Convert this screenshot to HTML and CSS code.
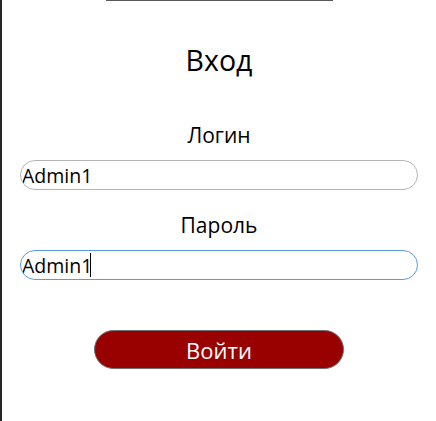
FILE: index.html
```html
<!DOCTYPE html>
<html lang="ru">
<head>
<meta charset="utf-8">
<title>Вход</title>
<link rel="stylesheet" href="styles.css">
</head>
<body>
<div class="page">
  <div class="topline"></div>
  <form class="login">
    <h1 class="title">Вход</h1>
    <label class="label" for="login">Логин</label>
    <input class="field" id="login" type="text" value="Admin1">
    <label class="label label-2" for="pass">Пароль</label>
    <div class="field-wrap">
      <input class="field field-focus" id="pass" type="text" value="Admin1">
      <span class="caret"></span>
    </div>
    <button class="submit" type="button">Войти</button>
  </form>
</div>
</body>
</html>
```
FILE: styles.css
```css
html, body {
  margin: 0;
  padding: 0;
  background: #ffffff;
}
body {
  font-family: "Open Sans", "Noto Sans", sans-serif;
  color: #000;
}
.page {
  min-height: 421px;
  border-left: 2px solid #262626;
  box-sizing: border-box;
  display: flex;
  flex-direction: column;
  align-items: center;
}
.topline {
  width: 227px;
  height: 1px;
  background: #5a5a5a;
}
.login {
  display: flex;
  flex-direction: column;
  align-items: center;
  width: 100%;
  padding-top: 39px;
}
.title {
  margin: 0;
  font-size: 28.5px;
  font-weight: 400;
  line-height: 40px;
}
.label {
  margin-top: 41px;
  font-size: 21px;
  line-height: 28px;
}
.label-2 {
  margin-top: 21px;
}
.field-wrap {
  position: relative;
  margin-top: 11px;
}
.field-wrap .field {
  margin-top: 0;
  display: block;
}
.field {
  margin-top: 11px;
  width: 398px;
  height: 30px;
  box-sizing: border-box;
  border: 1px solid #b4b4b4;
  border-radius: 15px;
  padding: 0 0 0 1px;
  font-family: "Open Sans", "Noto Sans", sans-serif;
  font-size: 19.5px;
  color: #000;
  outline: none;
  background: #fff;
}
.field-focus {
  border-color: #5a9be6;
}
.caret {
  position: absolute;
  left: 70px;
  top: 3px;
  width: 1px;
  height: 24px;
  background: #000;
}
.submit {
  margin-top: 50px;
  width: 250px;
  height: 39px;
  border: 1px solid #707070;
  border-radius: 20px;
  background: #990000;
  color: #fff;
  font-family: "Open Sans", "Noto Sans", sans-serif;
  font-size: 22px;
  line-height: 1;
  padding: 0;
}
```
